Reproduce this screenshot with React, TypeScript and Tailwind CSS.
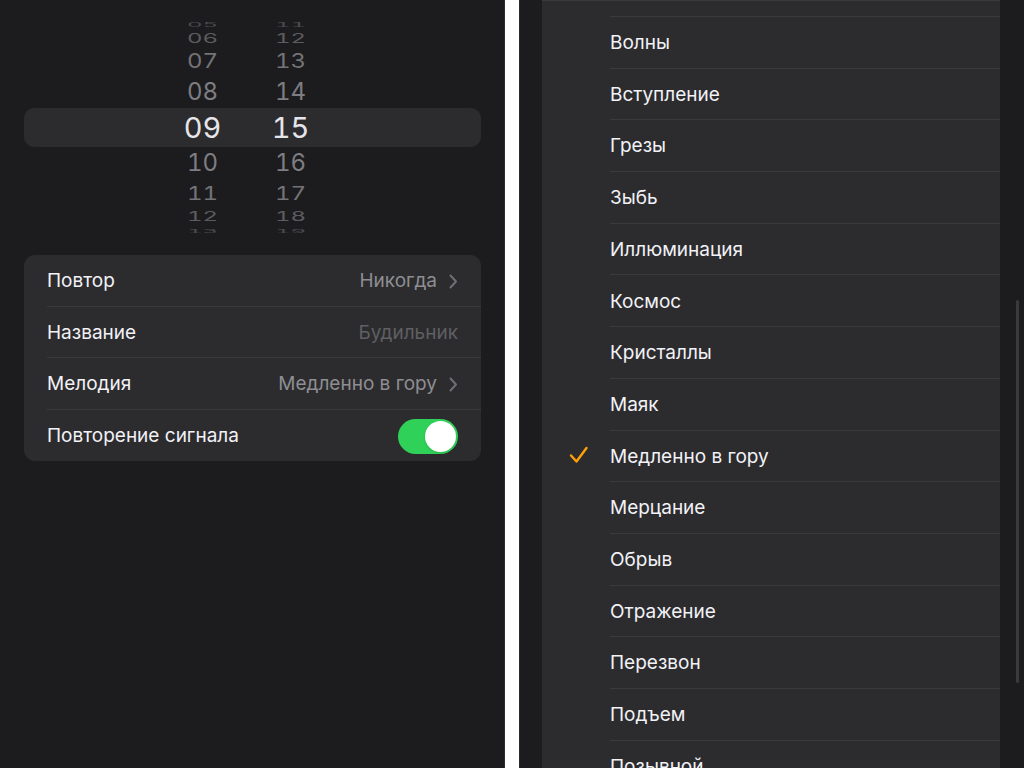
import React from "react";

const hours = [
  { v: "05", h: "h-[11px]", cls: "text-[24px] scale-y-[0.25] text-[#4a4a4e]" },
  { v: "06", h: "h-[17px]", cls: "text-[24px] scale-y-[0.55] text-[#5c5c60]" },
  { v: "07", h: "h-[28px]", cls: "text-[24px] scale-y-[0.85] text-[#737377]" },
  { v: "08", h: "h-[34px]", cls: "text-[24px] text-[#7d7d82]" },
  { v: "09", h: "h-[37px]", cls: "text-[29px] text-[#e5e5ea]" },
  { v: "10", h: "h-[34px]", cls: "text-[24px] text-[#7d7d82]" },
  { v: "11", h: "h-[28px]", cls: "text-[24px] scale-y-[0.8] text-[#737377]" },
  { v: "12", h: "h-[17px]", cls: "text-[24px] scale-y-[0.55] text-[#5c5c60]" },
  { v: "13", h: "h-[12px]", cls: "text-[24px] scale-y-[0.2] text-[#4a4a4e]" },
];

const minutes = ["11", "12", "13", "14", "15", "16", "17", "18", "19"];

const tones = [
  "Волны",
  "Вступление",
  "Грезы",
  "Зыбь",
  "Иллюминация",
  "Космос",
  "Кристаллы",
  "Маяк",
  "Медленно в гору",
  "Мерцание",
  "Обрыв",
  "Отражение",
  "Перезвон",
  "Подъем",
  "Позывной",
];

const Chevron = () => (
  <svg width="9" height="15" viewBox="0 0 9 15" className="ml-[12px]">
    <path
      d="M1.5 1.5 L7 7.5 L1.5 13.5"
      fill="none"
      stroke="#6e6e73"
      strokeWidth="2"
      strokeLinecap="round"
      strokeLinejoin="round"
    />
  </svg>
);

const Wheel = ({ values }: { values: string[] }) => (
  <div className="flex w-[60px] flex-col">
    {hours.map((row, i) => (
      <div key={i} className={`flex items-center justify-center ${row.h}`}>
        <span className={`leading-none tabular-nums ${row.cls}`}>{values[i]}</span>
      </div>
    ))}
  </div>
);

const SettingRow = ({
  label,
  children,
  last,
}: {
  label: string;
  children?: React.ReactNode;
  last?: boolean;
}) => (
  <div className="flex h-[51.5px] pl-[23px]">
    <div
      className={`flex flex-1 items-center justify-between pr-[23px] pt-[2px] ${
        last ? "" : "border-b border-[#3a3a3c]"
      }`}
    >
      <span className="text-[19px] text-[#f2f2f7]">{label}</span>
      {children}
    </div>
  </div>
);

const App = () => {
  return (
    <div
      className="flex h-[768px] w-[1024px] overflow-hidden bg-white"
      style={{ fontFamily: "Inter, 'Noto Sans', sans-serif" }}
    >
      {/* left: alarm editor */}
      <div className="flex h-full w-[505px] flex-col border-r border-[#2c2c2e] bg-[#1c1c1e] pl-[24px] pr-[23px]">
        <div className="relative mt-[19px] flex h-[218px] justify-center">
          <div className="absolute left-0 right-0 top-[89px] h-[39px] rounded-[10px] bg-[#2c2c2e]" />
          <div className="relative flex gap-[28px] pr-[12px]">
            <Wheel values={hours.map((h) => h.v)} />
            <Wheel values={minutes} />
          </div>
        </div>

        <div className="mt-[18px] overflow-hidden rounded-[11px] bg-[#2c2c2e]">
          <SettingRow label="Повтор">
            <div className="flex items-center">
              <span className="text-[19px] text-[#8e8e93]">Никогда</span>
              <Chevron />
            </div>
          </SettingRow>
          <SettingRow label="Название">
            <span className="text-[19px] text-[#5f5f64]">Будильник</span>
          </SettingRow>
          <SettingRow label="Мелодия">
            <div className="flex items-center">
              <span className="text-[19px] text-[#8e8e93]">Медленно в гору</span>
              <Chevron />
            </div>
          </SettingRow>
          <SettingRow label="Повторение сигнала" last>
            <div className="flex h-[35px] w-[60px] items-center justify-end rounded-full bg-[#30d158] pr-[2px]">
              <div className="h-[31px] w-[31px] rounded-full bg-white shadow" />
            </div>
          </SettingRow>
        </div>
      </div>

      <div className="w-[14px] bg-white" />

      {/* right: tone list */}
      <div className="flex h-full flex-1 border-l border-[#2a2a2d] bg-[#1c1c1e]">
        <div className="ml-[22px] flex w-[458px] flex-col border-t border-[#3a3a3c] bg-[#2c2c2e]">
          <div className="h-[15px] shrink-0" />
          {tones.map((t) => (
            <div key={t} className="flex h-[51.7px] shrink-0">
              <div className="flex w-[68px] items-center justify-center pl-[5px]">
                {t === "Медленно в гору" && (
                  <svg width="20" height="18" viewBox="0 0 20 18">
                    <path
                      d="M2 9.5 L7.5 15.5 L17.5 2"
                      fill="none"
                      stroke="#ff9f0a"
                      strokeWidth="2.4"
                      strokeLinecap="round"
                      strokeLinejoin="round"
                    />
                  </svg>
                )}
              </div>
              <div className="flex flex-1 items-center border-t border-[#3a3a3c] pt-[2px]">
                <span className="text-[19px] text-[#f2f2f7]">{t}</span>
              </div>
            </div>
          ))}
        </div>
        <div className="flex flex-1 justify-end pr-[5px]">
          <div className="mt-[300px] h-[383px] w-[3px] rounded-full bg-[#3a3a3c]" />
        </div>
      </div>
    </div>
  );
};

export default App;
